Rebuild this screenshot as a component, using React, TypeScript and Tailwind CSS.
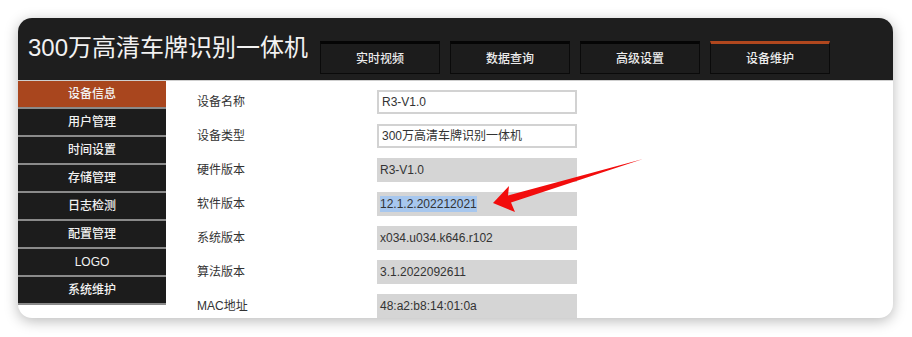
import React from "react";

const font = { fontFamily: '"Liberation Sans", "Noto Sans CJK SC", sans-serif' };

const tabs = ["实时视频", "数据查询", "高级设置", "设备维护"];
const side = ["设备信息", "用户管理", "时间设置", "存储管理", "日志检测", "配置管理", "LOGO", "系统维护"];

const rows: { label: string; value: string; kind: "input" | "ro" | "sel" }[] = [
  { label: "设备名称", value: "R3-V1.0", kind: "input" },
  { label: "设备类型", value: "300万高清车牌识别一体机", kind: "input" },
  { label: "硬件版本", value: "R3-V1.0", kind: "ro" },
  { label: "软件版本", value: "12.1.2.202212021", kind: "sel" },
  { label: "系统版本", value: "x034.u034.k646.r102", kind: "ro" },
  { label: "算法版本", value: "3.1.2022092611", kind: "ro" },
  { label: "MAC地址", value: "48:a2:b8:14:01:0a", kind: "ro" },
];

export default function App() {
  return (
    <div className="w-[912px] h-[337px] bg-white pt-[18px] pl-[18px]" style={font}>
      <div className="relative w-[875px] h-[300px] rounded-[14px] overflow-hidden bg-white shadow-[0_3px_14px_rgba(0,0,0,0.28)] flex flex-col">
        {/* header */}
        <div className="h-[62px] bg-[#1e1e1e] flex pl-[10px] shrink-0">
          <div className="w-[292px] flex items-center text-[24px] text-[#f2f2f2] leading-none pb-[2px]">
            300万高清车牌识别一体机
          </div>
          <div className="flex items-end gap-[10px] pb-[6px]">
            {tabs.map((t, i) => (
              <div
                key={t}
                className={
                  "w-[120px] h-[33px] flex items-center justify-center text-[12px] font-medium text-[#ececec] bg-[#1c1c1c] border border-[#0a0a0a] border-t-[3px] " +
                  (i === 3 ? "border-t-[#b0471e]" : "border-t-[#050505]")
                }
              >
                {t}
              </div>
            ))}
          </div>
        </div>
        <div className="h-px bg-[#cfcfcf] shrink-0" />
        {/* body */}
        <div className="flex flex-1 min-h-0">
          <div className="w-[148px] shrink-0 self-start">
            {side.map((s, i) => (
              <div
                key={s}
                className={
                  "h-[28px] flex items-center justify-center text-[12px] font-medium text-[#f2f2f2] border-b-2 border-[#8a8a8a] " +
                  (i === 0 ? "bg-[#a9461e]" : "bg-[#1c1c1c]")
                }
              >
                {s}
              </div>
            ))}
          </div>
          <div className="flex-1 pl-[31px] pt-[4px]">
            {rows.map((r) => (
              <div key={r.label} className="h-[34px] flex items-center">
                <div className="w-[180px] text-[12px] text-[#333]">{r.label}</div>
                {r.kind === "input" ? (
                  <div className="w-[200px] h-[24px] border-2 border-[#d2d2d2] bg-white flex items-center pl-[3px] text-[12px] text-[#333]">
                    {r.value}
                  </div>
                ) : (
                  <div className="w-[200px] h-[24px] bg-[#d5d5d5] flex items-center pl-[3px] text-[12px] text-[#333]">
                    {r.kind === "sel" ? (
                      <span className="bg-[#a7c7ee] leading-[16px]">{r.value}</span>
                    ) : (
                      r.value
                    )}
                  </div>
                )}
              </div>
            ))}
          </div>
        </div>
        {/* red arrow annotation */}
        <svg className="absolute left-0 top-0 pointer-events-none" width="875" height="300" viewBox="0 0 875 300">
          <polygon
            points="475,185 491,168 490,177.5 625,141 493,184.5 497,194"
            fill="#f20d0d"
          />
        </svg>
      </div>
    </div>
  );
}
